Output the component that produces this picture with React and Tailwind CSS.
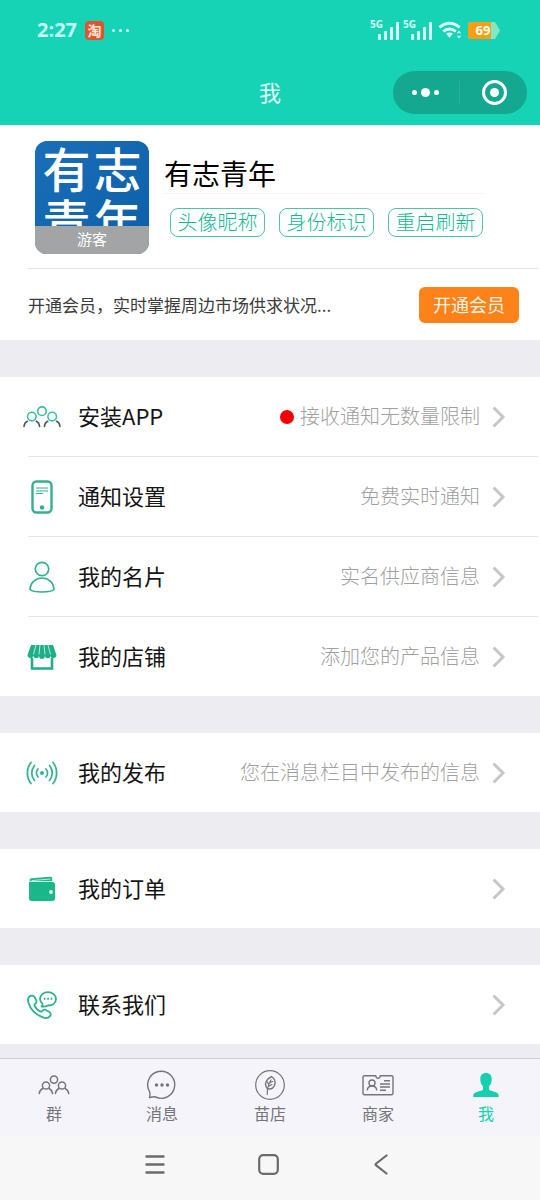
import React, { useState } from "react";

/* ---------- status bar icons ---------- */

function SignalIcon() {
  return (
    <span className="flex h-6 w-[33px] items-start text-[#d9fff6]">
      <span className="w-3.5 shrink-0 font-['Open_Sans',sans-serif] text-[10px] leading-3 font-bold">5G</span>
      <svg className="-ml-1.5 shrink-0" width="22" height="24" viewBox="0 0 22 24" fill="currentColor" aria-hidden="true">
        <rect x="0" y="16" width="3" height="6" rx="1" />
        <rect x="6" y="13" width="3" height="9" rx="1" />
        <rect x="12" y="9" width="3" height="13" rx="1" />
        <rect x="18" y="4" width="3" height="18" rx="1" />
      </svg>
    </span>
  );
}

function WifiIcon() {
  return (
    <svg width="24" height="18" viewBox="0 0 24 18" fill="none" stroke="#d9fff6" strokeWidth="3" aria-hidden="true">
      <path d="M1.5 6.5C7 .8 16 .8 21.5 6.5" />
      <path d="M5.3 10.5c3.6-3.4 9-3.4 12.4 0" />
      <path d="M8 12.6c2-1.6 5-1.6 7 0L11.5 17z" fill="#d9fff6" stroke="none" />
      <path d="M21 9.5l2.2 2.8h-4.4zM21 17.5l2.2-2.8h-4.4z" fill="#d9fff6" stroke="none" />
    </svg>
  );
}

/* ---------- menu icons ---------- */

function GroupIcon() {
  return (
    <svg width="38" height="22" viewBox="0 0 38 22" fill="none" strokeWidth="1.6" strokeLinecap="round" aria-hidden="true">
      <g stroke="#3dbfa3">
        <circle cx="19" cy="5.2" r="4.3" />
        <circle cx="8.8" cy="10.6" r="4.3" />
        <circle cx="29.2" cy="10.6" r="4.3" />
      </g>
      <g stroke="#4c5a58">
        <path d="M1 20.5c.2-2.3 1.3-4.2 3.3-5.2M13.3 15.3c2 1 3.1 2.9 3.3 5.2" />
        <path d="M21.4 20.5c.2-2.3 1.3-4.2 3.3-5.2M33.7 15.3c2 1 3.1 2.9 3.3 5.2" />
      </g>
    </svg>
  );
}

function PhoneIcon() {
  return (
    <svg width="22" height="34" viewBox="0 0 22 34" fill="none" stroke="#33b08e" aria-hidden="true">
      <rect x="1.5" y="1.5" width="19" height="31" rx="4" strokeWidth="2.4" />
      <path d="M5 8h12M5 11h12M5 13.5h7" strokeWidth="1" />
      <circle cx="11" cy="27.5" r="2.2" fill="#33b08e" stroke="none" />
    </svg>
  );
}

function PersonIcon() {
  return (
    <svg width="26" height="32" viewBox="0 0 26 32" fill="none" stroke="#33b08e" strokeWidth="1.7" aria-hidden="true">
      <circle cx="13" cy="8" r="6.7" />
      <path d="M1 28.5C1.5 21.5 6.5 17 13 17s11.5 4.5 12 11.5c-3.5 3.3-20.5 3.3-24 0z" strokeLinejoin="round" />
    </svg>
  );
}

function ShopIcon() {
  return (
    <svg width="30" height="26" viewBox="0 0 30 26" aria-hidden="true">
      <path
        d="M4 1h22l3.3 9.5a2.9 2.9 0 0 1-5.7 1.5 2.9 2.9 0 0 1-5.7 0 2.9 2.9 0 0 1-5.8 0 2.9 2.9 0 0 1-5.7 0A2.9 2.9 0 0 1 .7 10.5z"
        fill="#1fae87"
      />
      <path d="M9 1L6.5 10.5M13 1l-1 9.5M17 1l1 9.5M21 1l2.5 9.5" stroke="#b4ead9" strokeWidth="1" />
      <path d="M5 14v10.5h20V14" fill="none" stroke="#1fae87" strokeWidth="2.6" />
    </svg>
  );
}

function BroadcastIcon() {
  return (
    <svg width="32" height="24" viewBox="0 0 32 24" fill="none" stroke="#36b392" strokeWidth="1.8" strokeLinecap="round" aria-hidden="true">
      <circle cx="16" cy="12" r="2" fill="#36b392" stroke="none" />
      <path d="M12 8c-2 2.3-2 5.7 0 8M20 8c2 2.3 2 5.7 0 8" />
      <path d="M8.5 4.5c-3.7 4.5-3.7 10.5 0 15M23.5 4.5c3.7 4.5 3.7 10.5 0 15" />
      <path d="M5 1.5C.2 7.5.2 16.5 5 22.5M27 1.5c4.8 6 4.8 15 0 21" />
    </svg>
  );
}

function WalletIcon() {
  return (
    <svg width="28" height="26" viewBox="0 0 28 26" aria-hidden="true">
      <path d="M1.5 4.5c0-1.5 1-2 2-2.2L22 .8c1.5-.1 2.2.5 2.2 1.7v2.7H2.5z" fill="#1bb68a" />
      <path d="M3.5 4.6L22.5 3" stroke="#d6fff2" strokeWidth=".8" />
      <path d="M1 4.5c0 1 .8 1.5 2 1.5h21.500C26 6 27 7 27 8.500v14c0 1.500-1 2.500-2.500 2.500h-21C2 25 1 24 1 22.500z" fill="#1bb68a" />
      <circle cx="23" cy="16" r="1.9" fill="#d6fff2" />
    </svg>
  );
}

function ContactIcon() {
  return (
    <svg width="30" height="28" viewBox="0 0 30 28" fill="none" stroke="#2fb18d" strokeWidth="1.8" strokeLinejoin="round" aria-hidden="true">
      <path d="M2.5 5.5C4 4 6.5 4.3 7.5 6l1.7 3.2c.7 1.4.2 2.7-1.2 3.8-.7.6-.7 1.3-.2 2.2 1.2 2.2 3 4 5.2 5.2.9.5 1.5.4 2.1-.3 1.1-1.4 2.3-1.8 3.7-1.1l3.3 1.8c1.8 1 2 3.2.7 4.6-1.5 1.6-3.8 2-6.3 1.2C9.5 24.3 3.5 18.5 1.3 11.5c-.6-2.400-.4-4.500 1.200-6z" />
      <path d="M14.5 15.5c1-.8 1.3-1.7 1-2.8A6.3 6.3 0 0 1 13 8c0-4 3.5-6.8 8-6.8S29 4 29 8s-3.5 6.5-8 6.5c-2 1-4.3 1.5-6.500 1z" />
      <path d="M16.8 7.8h1.7M20.2 7.8h1.7M23.6 7.8h1.7" strokeWidth="2" />
    </svg>
  );
}

/* ---------- tab bar icons ---------- */

function TabGroupIcon() {
  return (
    <svg width="32" height="20" viewBox="0 0 32 20" fill="none" stroke="currentColor" strokeWidth="1.5" strokeLinecap="round" aria-hidden="true">
      <circle cx="16" cy="4.6" r="3.6" />
      <circle cx="8" cy="10.5" r="3.6" />
      <circle cx="24" cy="10.5" r="3.6" />
      <path d="M1.2 18.5c.3-2.2 1.5-4 3.6-5M11.2 13.5c2 1 3 2.8 3.4 5M17.4 18.5c.3-2.2 1.5-4 3.5-5M27.2 13.5c2 1 3.2 2.8 3.6 5" />
    </svg>
  );
}

function TabMessageIcon() {
  return (
    <svg width="30" height="30" viewBox="0 0 30 30" fill="none" stroke="currentColor" strokeWidth="1.4" strokeLinejoin="round" aria-hidden="true">
      <path d="M2.5 27.5c.7-2 .8-3.5 0-6A13.5 13.5 0 1 1 8.5 27c-2-.6-4 .2-6 .5z" />
      <g fill="currentColor" stroke="none">
        <circle cx="9.5" cy="15" r="1.7" />
        <circle cx="15" cy="15" r="1.7" />
        <circle cx="20.5" cy="15" r="1.7" />
      </g>
    </svg>
  );
}

function TabLeafIcon() {
  return (
    <svg width="30" height="30" viewBox="0 0 30 30" fill="none" stroke="currentColor" strokeWidth="1.2" strokeLinecap="round" aria-hidden="true">
      <circle cx="15" cy="15" r="14.3" />
      <path d="M16.5 6.5c3.3 2.3 4.3 5.5 3 8.8-1.2 2.9-4 4.4-7.3 3.4-2.2-3-2-6.5.3-9.2 1.2-1.4 2.5-1.8 4-3z" strokeWidth="1.4" />
      <path d="M12.3 24.5c-.3-5 1-10 3.7-14.5M13.2 16.5l3.6-2M13.7 14.5l-1.2-2.5M14.7 12.7l3-1.2" />
    </svg>
  );
}

function TabCardIcon() {
  return (
    <svg width="32" height="22" viewBox="0 0 32 22" fill="none" stroke="currentColor" strokeWidth="1.4" aria-hidden="true">
      <path d="M2.5 1.8h11.2c.3 1.5 1 2.4 2.3 2.4s2-.9 2.3-2.4h11.2c.9 0 1.5.6 1.5 1.5v15.9c0 .9-.6 1.5-1.5 1.5h-27c-.9 0-1.5-.6-1.5-1.5V3.3c0-.9.6-1.5 1.5-1.5z" />
      <circle cx="10" cy="9" r="3" />
      <path d="M5.2 16.3c.3-2.5 2-4.3 4.8-4.3s4.5 1.8 4.8 4.3" />
      <path d="M22 6.8h6M18 10h10M18 13h10M18 16.2h6" />
    </svg>
  );
}

function TabMeIcon() {
  return (
    <svg width="26" height="26" viewBox="0 0 26 26" fill="currentColor" aria-hidden="true">
      <path d="M13 1c3.8 0 5.7 2.3 5.7 6 0 3.3-.8 5.5-2.7 7.3v2.5c0 1 .5 1.5 1.5 1.8 4.5 1.5 8 2 8.3 5.4 0 .8-.4 1-1.2 1H1.4c-.8 0-1.2-.2-1.2-1 .3-3.4 3.8-3.9 8.3-5.4 1-.3 1.5-.8 1.5-1.8v-2.5C8.1 12.500 7.300 10.300 7.300 7c0-3.700 1.900-6 5.700-6z" />
    </svg>
  );
}

function Chevron() {
  return (
    <svg className="shrink-0" width="14" height="22" viewBox="0 0 14 22" fill="none" stroke="#c7c7c9" strokeWidth="3" aria-hidden="true">
      <path d="M1.5 1.5L11 11l-9.5 9.5" />
    </svg>
  );
}

const MENU_GROUPS = [
  [
    { icon: GroupIcon, label: "安装APP", hint: "接收通知无数量限制", dot: true },
    { icon: PhoneIcon, label: "通知设置", hint: "免费实时通知" },
    { icon: PersonIcon, label: "我的名片", hint: "实名供应商信息" },
    { icon: ShopIcon, label: "我的店铺", hint: "添加您的产品信息" },
  ],
  [{ icon: BroadcastIcon, label: "我的发布", hint: "您在消息栏目中发布的信息" }],
  [{ icon: WalletIcon, label: "我的订单" }],
  [{ icon: ContactIcon, label: "联系我们" }],
];

const TABS = [
  { icon: TabGroupIcon, label: "群" },
  { icon: TabMessageIcon, label: "消息" },
  { icon: TabLeafIcon, label: "苗店" },
  { icon: TabCardIcon, label: "商家" },
  { icon: TabMeIcon, label: "我" },
];

function MenuRow({ item }) {
  const Icon = item.icon;
  return (
    <button type="button" className="flex h-[79px] w-full items-center pl-5 pr-[34px] text-left">
      <span className="flex w-11 shrink-0 justify-center">
        <Icon />
      </span>
      <span className="ml-3.5 pb-1 text-[22px] leading-8 text-[#151515]">{item.label}</span>
      <span className="ml-auto flex items-center">
        {item.dot && <span className="mr-1.5 size-3.5 rounded-full bg-[#f50000]" />}
        {item.hint && (
          <span className="mr-3 pb-0.5 text-[20px] leading-7 font-light text-[#a0a0a0]">{item.hint}</span>
        )}
        <Chevron />
      </span>
    </button>
  );
}

export default function App() {
  const [activeTab, setActiveTab] = useState("我");

  return (
    <div className="flex min-h-screen flex-col bg-[#ededf1] font-['Noto_Sans_CJK_SC',sans-serif]">
      {/* HEADER */}
      <header className="bg-[#17d3b5]">
        <div className="flex h-[60px] items-center pl-[37px] pr-10">
          <span className="font-['Open_Sans',sans-serif] text-[20px] leading-6 font-bold text-[#c9fff5]">2:27</span>
          <span className="ml-2 flex size-[19px] items-center justify-center rounded bg-[#e2532f] pb-px text-[14px] leading-4 font-bold text-[#ffeadb]">
            淘
          </span>
          <span className="ml-2 flex gap-1">
            <i className="size-[3px] rounded-full bg-[#c9fff5]" />
            <i className="size-[3px] rounded-full bg-[#c9fff5]" />
            <i className="size-[3px] rounded-full bg-[#c9fff5]" />
          </span>
          <span className="ml-auto flex items-center">
            <SignalIcon />
            <SignalIcon />
            <span className="ml-0.5">
              <WifiIcon />
            </span>
            <span className="relative ml-1.5 flex h-[17px] w-8 items-center justify-center pr-0.5">
              <svg className="absolute inset-0" width="32" height="17" viewBox="0 0 32 17" aria-hidden="true">
                <path d="M3 0h24l5 8.5-5 8.5H3a3 3 0 0 1-3-3V3a3 3 0 0 1 3-3z" fill="#81e8c4" />
                <path d="M3 0h20v17H3a3 3 0 0 1-3-3V3a3 3 0 0 1 3-3z" fill="#fb9e12" />
              </svg>
              <span className="relative font-['Open_Sans',sans-serif] text-[13px] leading-4 font-bold text-white">69</span>
            </span>
          </span>
        </div>
        <div className="grid h-[65px] grid-cols-[1fr_auto_1fr] items-center">
          <h1 className="col-start-2 pb-1 text-[22px] leading-8 text-[#e0fffa]">我</h1>
          <div className="mr-[13px] flex h-[43px] w-[134px] items-center justify-self-end rounded-full bg-[#14a890]">
            <button type="button" aria-label="更多" className="flex h-full flex-1 items-center justify-center gap-1">
              <i className="size-[5px] rounded-full bg-white" />
              <i className="size-[9px] rounded-full bg-white" />
              <i className="size-[5px] rounded-full bg-white" />
            </button>
            <span className="h-6 w-px bg-[#2fae99]" />
            <button type="button" aria-label="关闭" className="flex h-full flex-1 items-center justify-center pl-0.5">
              <span className="flex size-[25px] items-center justify-center rounded-full border-3 border-white">
                <i className="size-[9px] rounded-full bg-white" />
              </span>
            </button>
          </div>
        </div>
      </header>

      <main className="flex flex-1 flex-col gap-[37px]">
        {/* PROFILE */}
        <section className="bg-white">
          <div className="flex h-[143px] pl-[35px] pt-4">
            <div className="flex h-[113px] w-[114px] shrink-0 flex-col overflow-hidden rounded-xl bg-linear-to-br from-[#1a6fb8] to-[#0a5fa8]">
              <div className="grid min-h-0 flex-1 grid-cols-2 overflow-hidden px-1.5 text-center text-[48px] leading-[52px] font-medium text-white">
                <span>有</span>
                <span>志</span>
                <span>青</span>
                <span>年</span>
              </div>
              <span className="h-7 shrink-0 bg-[#a3a4a6] text-center text-[15px] leading-[26px] text-white">游客</span>
            </div>
            <div className="ml-[15px]">
              <h2 className="border-b border-[#f3f3f3] pb-px pt-[13px] text-[28px] leading-[38px] text-black">有志青年</h2>
              <div className="ml-1.5 mt-3.5 flex gap-3.5">
                {["头像昵称", "身份标识", "重启刷新"].map((name) => (
                  <button
                    key={name}
                    type="button"
                    className="h-[29px] w-[95px] rounded-lg border border-[#4cc4a8] pb-0.5 text-[20px] leading-6 font-light whitespace-nowrap text-[#14b896]"
                  >
                    {name}
                  </button>
                ))}
              </div>
            </div>
          </div>
          <div className="ml-7 mr-0.5 flex h-[72px] items-center justify-between border-t border-[#e3e3e3] pr-[19px]">
            <p className="truncate text-[17px] leading-6 text-[#3c3c3c]">开通会员，实时掌握周边市场供求状况...</p>
            <button
              type="button"
              className="h-9 w-[100px] shrink-0 rounded-md bg-[#fc8219] pb-0.5 text-[18px] leading-6 text-[#fff3e2]"
            >
              开通会员
            </button>
          </div>
        </section>

        {/* MENU */}
        {MENU_GROUPS.map((group, i) => (
          <section key={i} className="bg-white">
            {group.map((item, j) => (
              <div key={item.label}>
                {j > 0 && <div className="ml-7 mr-0.5 h-px bg-[#e6e6e6]" />}
                <MenuRow item={item} />
              </div>
            ))}
          </section>
        ))}
      </main>

      {/* TAB BAR */}
      <nav className="grid h-[78px] grid-cols-5 border-t border-[#cfcfd3] bg-[#f4f4fa]">
        {TABS.map(({ icon: Icon, label }) => (
          <button
            key={label}
            type="button"
            onClick={() => setActiveTab(label)}
            className={`flex flex-col items-center pt-[11px] pb-2 ${activeTab === label ? "text-[#17cfae]" : "text-[#747479]"}`}
          >
            <span className="flex h-[30px] items-center">
              <Icon />
            </span>
            <span className="mt-px text-[16px] leading-6">{label}</span>
          </button>
        ))}
      </nav>

      {/* SYSTEM NAVIGATION */}
      <footer className="flex h-16 items-start justify-center bg-[#f7f7f7] pr-1 pt-[18px] text-[#6b6b6b]">
        <button type="button" aria-label="最近任务" className="flex w-[113px] justify-center">
          <svg width="20" height="21" viewBox="0 0 20 21" stroke="currentColor" strokeWidth="2.4" strokeLinecap="round">
            <path d="M1.5 2.5h17M1.5 10.5h17M1.5 18.5h17" />
          </svg>
        </button>
        <button type="button" aria-label="主屏幕" className="flex w-[113px] justify-center">
          <svg width="21" height="21" viewBox="0 0 21 21" fill="none" stroke="currentColor" strokeWidth="2.2">
            <rect x="1.2" y="1.2" width="18.6" height="18.6" rx="4" />
          </svg>
        </button>
        <button type="button" aria-label="返回" className="flex w-[113px] justify-center">
          <svg width="14" height="21" viewBox="0 0 14 21" fill="none" stroke="currentColor" strokeWidth="2.2" strokeLinecap="round" strokeLinejoin="round">
            <path d="M12.5 1.5L2.2 9.5c-.8.6-.8 1.3 0 1.9l10.3 8.1" />
          </svg>
        </button>
      </footer>
    </div>
  );
}
